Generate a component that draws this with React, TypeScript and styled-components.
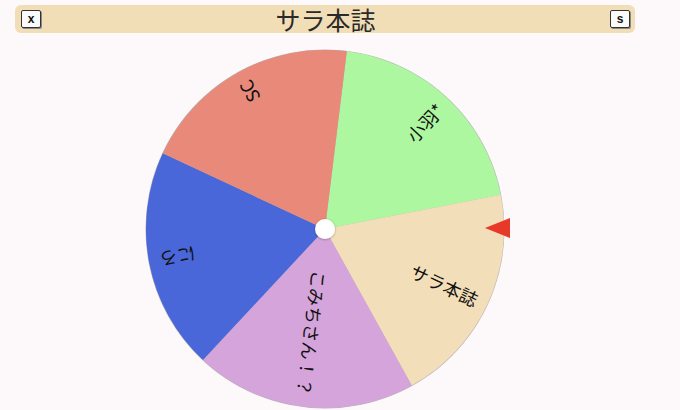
import React from "react";
import styled, { createGlobalStyle } from "styled-components";

const Global = createGlobalStyle`
  html, body { margin: 0; padding: 0; background: #fdf8fa; }
  body { font-family: "Noto Sans CJK JP", "Noto Sans", sans-serif; }
`;

const Page = styled.div`
  width: 620px;
  margin-left: 15px;
  padding-top: 5px;
  display: flex;
  flex-direction: column;
`;

const Header = styled.header`
  height: 28px;
  background: #f2deb6;
  border-radius: 6px;
  display: grid;
  grid-template-columns: 1fr auto 1fr;
  align-items: center;
  padding: 0 5px 0 6px;
`;

const Title = styled.h1`
  margin: 0;
  font-family: "Noto Sans CJK JP", sans-serif;
  font-weight: 400;
  font-size: 25px;
  line-height: 28px;
  color: #2a2a2a;
`;

const SmallButton = styled.button<{ $align: "start" | "end" }>`
  justify-self: ${(p) => p.$align};
  width: 20px;
  height: 18px;
  padding: 0;
  border: 1px solid #333;
  border-radius: 2px;
  background: #fafafa;
  box-shadow: 1px 1px 0 #888;
  font-family: "Liberation Sans", Arial, sans-serif;
  font-weight: 700;
  font-size: 12px;
  line-height: 16px;
  color: #111;
`;

const WheelArea = styled.div`
  display: flex;
  justify-content: center;
  padding-top: 7px;
`;

const WheelSvg = styled.svg`
  display: block;
  overflow: visible;
`;

const Label = styled.text`
  font-family: "Noto Sans CJK JP", sans-serif;
  font-size: 18px;
  fill: #111;
`;

const R = 179;
const CX = 200;
const CY = 189;

const segments = [
  { label: "小羽*", color: "#adf7a0" },
  { label: "サラ本誌", color: "#f2deb8" },
  { label: "こみちさん！？", color: "#d5a4db" },
  { label: "にろ", color: "#4a67d9" },
  { label: "SC", color: "#e8897a" },
];

const START = -83;

function pt(a: number, r: number) {
  const rad = (a * Math.PI) / 180;
  return [CX + r * Math.cos(rad), CY + r * Math.sin(rad)];
}

export default function App() {
  const step = 360 / segments.length;
  return (
    <>
      <Global />
      <Page>
        <Header>
          <SmallButton $align="start">x</SmallButton>
          <Title>サラ本誌</Title>
          <SmallButton $align="end">s</SmallButton>
        </Header>
        <WheelArea>
          <WheelSvg width={400} height={372} viewBox="0 0 400 372">
            <defs>
              <filter id="hubShadow" x="-50%" y="-50%" width="200%" height="200%">
                <feDropShadow dx="0" dy="0.5" stdDeviation="1" floodColor="#000" floodOpacity="0.35" />
              </filter>
            </defs>
            <circle cx={CX} cy={CY} r={R + 0.5} fill="#b5b5b5" />
            {segments.map((s, i) => {
              const a0 = START + i * step;
              const a1 = a0 + step;
              const [x0, y0] = pt(a0, R);
              const [x1, y1] = pt(a1, R);
              return (
                <path
                  key={s.label}
                  d={`M${CX},${CY} L${x0},${y0} A${R},${R} 0 0 1 ${x1},${y1} Z`}
                  fill={s.color}
                />
              );
            })}
            {segments.map((s, i) => {
              const mid = START + i * step + step / 2;
              return (
                <Label
                  key={s.label + "t"}
                  transform={`translate(${CX} ${CY}) rotate(${mid}) translate(168 0)`}
                  textAnchor="end"
                  dominantBaseline="central"
                >
                  {s.label}
                </Label>
              );
            })}
            <circle cx={CX} cy={CY} r={10} fill="#fff" filter="url(#hubShadow)" />
            <polygon points={`${CX + 160},${CY - 1} ${CX + 185},${CY - 11} ${CX + 185},${CY + 9}`} fill="#e8382a" />
          </WheelSvg>
        </WheelArea>
      </Page>
    </>
  );
}
